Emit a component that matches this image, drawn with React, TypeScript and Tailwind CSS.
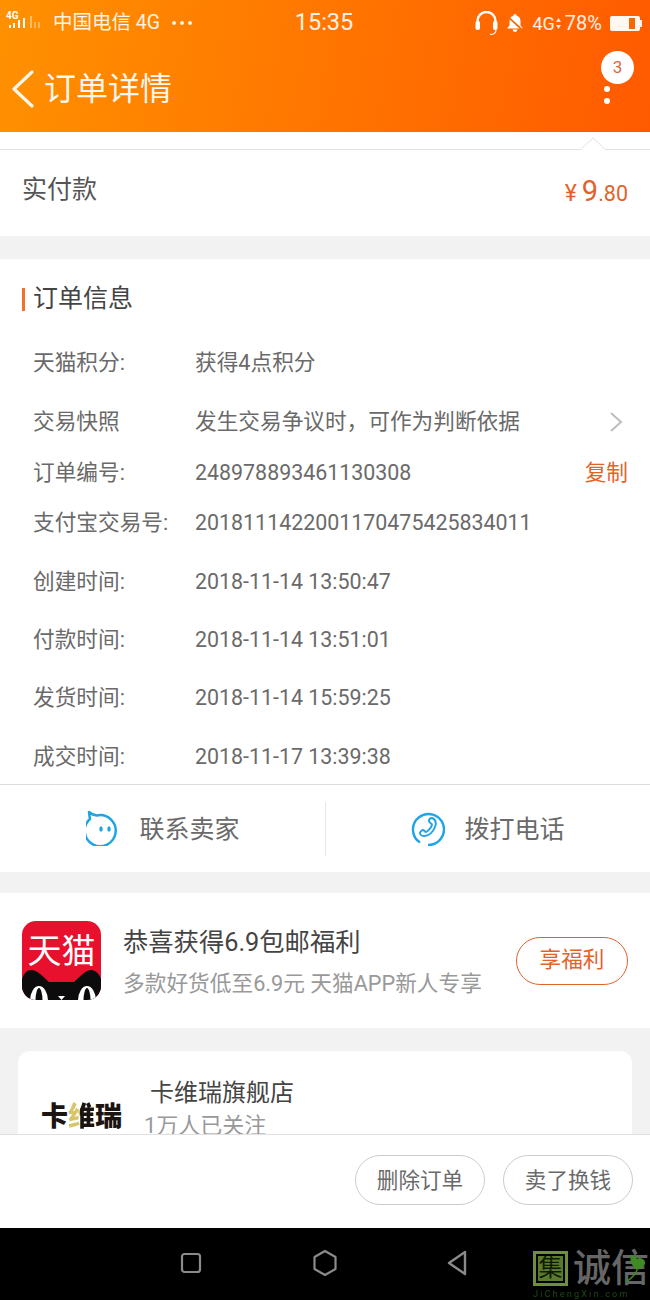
import React from "react";

const font = "font-['Roboto','Noto_Sans_CJK_SC',sans-serif]";

function InfoRow({ label, value, h, digits, right }: { label: string; value: string; h: string; digits?: boolean; right?: React.ReactNode }) {
  return (
    <div className={`flex items-center pl-[33px] pr-[22px] text-[21.67px] text-[#6a6a6a] ${h}`}>
      <span className="w-[162px] shrink-0 whitespace-nowrap">{label}</span>
      <span className={digits ? "flex-1 whitespace-nowrap text-[21.4px]" : "flex-1 whitespace-nowrap"}>{value}</span>
      {right}
    </div>
  );
}

function StatusBar() {
  return (
    <div className="flex h-[46px] items-center pl-[6px] pr-[8px] text-white/90">
      <div className="flex flex-1 items-center">
        <svg width="40" height="34" viewBox="0 -6 40 34" fill="none" stroke="white" strokeWidth="2">
          <text x="0" y="7" fontSize="10" fontWeight="700" fill="white" stroke="none" fontFamily="Roboto">4G</text>
          <path d="M4 13v3M8 11v5M13 8v8M18 6v10" />
          <path d="M25 4v12" strokeOpacity="0.7" strokeWidth="1.200" />
          <path d="M29 10v6M33 10v6" strokeOpacity="0.45" strokeWidth="1.600" />
        </svg>
        <span className="ml-[7px] whitespace-nowrap text-[19.5px]">中国电信 4G</span>
        <span className="ml-[12px] flex gap-[4px]">
          <i className="size-[4px] rounded-full bg-white/90" />
          <i className="size-[4px] rounded-full bg-white/90" />
          <i className="size-[4px] rounded-full bg-white/90" />
        </span>
      </div>
      <span className="text-[23.5px]">15:35</span>
      <div className="flex flex-1 items-center justify-end">
        <svg width="23" height="25" viewBox="0 0 23 25" fill="none" stroke="white" strokeWidth="2.400">
          <path d="M2.500 15V10a9 9 0 0 1 18 0v5" />
          <rect x="0.500" y="10" width="4.500" height="9" rx="2" fill="white" stroke="none" />
          <rect x="18" y="10" width="4.500" height="9" rx="2" fill="white" stroke="none" />
          <path d="M21 19c0 3-2 4.500-6 4.500" strokeWidth="1.200" />
        </svg>
        <svg className="ml-[8px]" width="18" height="20" viewBox="0 0 18 20" fill="white">
          <path d="M9 1a1.500 1.500 0 0 1 1.500 1.500c3 .8 4 3.200 4 6v4L17 15.500H1l2.500-3v-4c0-2.800 1-5.200 4-6A1.500 1.500 0 0 1 9 1zM6.500 16.500h5a2.500 2.500 0 0 1-5 0z" />
          <path d="M1 3l16 14.500" stroke="#fb6a00" strokeWidth="1.800" />
        </svg>
        <span className="ml-[8px] whitespace-nowrap text-[18px]">4G</span>
        <svg className="ml-[1px]" width="5" height="11" viewBox="0 0 5 11" fill="white" fillOpacity="0.85">
          <path d="M2.500 0L5 4H0zM0 7h5l-2.500 4z" />
        </svg>
        <span className="ml-[4px] whitespace-nowrap text-[20px]">78%</span>
        <span className="ml-[8px] flex h-[15px] w-[30px] items-center rounded-[2px] bg-white/95 py-[2px] pl-[19px]">
          <i className="h-full w-[6px] bg-[#f46a00]" />
        </span>
        <i className="h-[7px] w-[2px] bg-white/90" />
      </div>
    </div>
  );
}

function ChatIcon() {
  return (
    <svg width="34" height="35" viewBox="0 0 34 35" fill="none" stroke="#1fa4e6" strokeWidth="2.500">
      <path d="M3 1c.3 2.500.5 4.500 1 7a15.500 15.500 0 1 0 7-3.500C8 4 5 3 3 1z" strokeLinejoin="round" />
      <ellipse cx="15" cy="18" rx="1.700" ry="2.800" fill="#1fa4e6" stroke="none" />
      <ellipse cx="23" cy="18" rx="1.700" ry="2.800" fill="#1fa4e6" stroke="none" />
    </svg>
  );
}

function PhoneIcon() {
  return (
    <svg width="34" height="35" viewBox="0 0 34 35" fill="none" stroke="#1fa4e6" strokeWidth="2.400">
      <path d="M9 31.500A15.500 15.500 0 1 1 17 34" />
      <path d="M21 7c3 1 5 4 3 9-2 5-6 9-11 9-3 0-4-2-4-3s2-3 3-3 2 2 3 2 5-4 6-7c0-2-3-2-3-4s1-3 3-3z" strokeWidth="2" />
    </svg>
  );
}

function TmallLogo() {
  return (
    <div className="flex size-[79px] shrink-0 flex-col items-center overflow-hidden rounded-[14px] bg-[#e8112d]">
      <span className="mt-[8px] h-[41px] whitespace-nowrap text-[34px] leading-[44px] text-white">天猫</span>
      <svg width="79" height="30" viewBox="0 0 79 30">
        <path d="M0 30V9C2 3 5 0 9 0c7 0 12 7 18 12h25c6-5 11-12 17-12 4 0 8 3 10 9v21z" fill="#0c0c0c" />
        <ellipse cx="17" cy="31" rx="9" ry="15" fill="white" />
        <ellipse cx="17" cy="31" rx="3.500" ry="13" fill="#0c0c0c" />
        <ellipse cx="65" cy="31" rx="9" ry="15" fill="white" />
        <ellipse cx="65" cy="31" rx="3.500" ry="13" fill="#0c0c0c" />
        <path d="M36 26h7l-3.500 4z" fill="white" />
      </svg>
    </div>
  );
}

export default function App() {
  return (
    <div className={`flex h-[1300px] w-[650px] flex-col overflow-hidden bg-[#f2f2f2] ${font}`}>
      <header className="h-[132px] shrink-0 bg-[linear-gradient(100deg,#ff9100,#ff5a00)]">
        <StatusBar />
        <div className="flex h-[86px] items-start justify-between pl-[12px] pr-[16px]">
          <div className="flex items-center pt-[24px]">
            <svg width="22" height="38" viewBox="0 0 22 38" fill="none" stroke="white" strokeOpacity="0.92" strokeWidth="3.200" strokeLinecap="round" strokeLinejoin="round">
              <path d="M20 2L2 19l18 17" />
            </svg>
            <span className="ml-[10px] whitespace-nowrap text-[32px] leading-[38px] text-white/95">订单详情</span>
          </div>
          <div className="flex flex-col items-center pt-[5px]">
            <span className="flex size-[33px] items-center justify-center rounded-full bg-white text-[17px] text-[#e2663a]">3</span>
            <div className="mr-[21px] mt-[2px] flex flex-col items-center gap-[6px] self-center">
              <i className="size-[6px] rounded-full bg-white" />
              <i className="size-[6px] rounded-full bg-white" />
            </div>
          </div>
        </div>
      </header>

      <div className="flex-1 overflow-hidden">
        <div className="relative h-[18px] border-b border-[#e2e2e2] bg-white">
          <svg className="absolute left-[579px] top-[5px]" width="28" height="14" viewBox="0 0 28 14" fill="white" stroke="#e2e2e2">
            <path d="M1 13L14 1l13 12" />
          </svg>
        </div>
        <section className="flex h-[86px] items-center justify-between bg-white pl-[22px] pr-[22px]">
          <span className="pb-[6px] text-[25px] text-[#555]">实付款</span>
          <span className="flex items-baseline pb-[3px] text-[#e2622b]">
            <span className="mr-[5px] text-[23px]">¥</span>
            <span className="text-[29px]">9</span>
            <span className="text-[21.5px]">.80</span>
          </span>
        </section>

        <section className="mt-[23px] h-[526px] border-b border-[#dcdcdc] bg-white">
          <div className="flex h-[80px] items-center pl-[22px]">
            <i className="mr-[9px] h-[23px] w-[3px] bg-[#f2702a]" />
            <span className="ml-[-1px] text-[25px] text-[#444]">订单信息</span>
          </div>
          <InfoRow label="天猫积分:" value="获得4点积分" h="h-[48px]" />
          <InfoRow
            label="交易快照"
            value="发生交易争议时，可作为判断依据"
            h="h-[70px]"
            right={
              <svg className="mr-[5px]" width="14" height="22" viewBox="0 0 14 22" fill="none" stroke="#bdbdbd" strokeWidth="2">
                <path d="M2 2l10 9-10 9" />
              </svg>
            }
          />
          <InfoRow label="订单编号:" value="248978893461130308" digits h="h-[32px]" right={<span className="text-[#e2622b]">复制</span>} />
          <InfoRow label="支付宝交易号:" value="2018111422001170475425834011" digits h="h-[68px]" />
          <InfoRow label="创建时间:" value="2018-11-14 13:50:47" digits h="h-[50px]" />
          <InfoRow label="付款时间:" value="2018-11-14 13:51:01" digits h="h-[66px]" />
          <InfoRow label="发货时间:" value="2018-11-14 15:59:25" digits h="h-[50px]" />
          <InfoRow label="成交时间:" value="2018-11-17 13:39:38" digits h="h-[60px] pt-[8px]" />
        </section>

        <section className="flex h-[87px] items-center bg-white">
          <div className="flex w-[325px] shrink-0 items-center justify-center gap-[19px] pl-[1px]">
            <ChatIcon />
            <span className="pt-[2px] text-[25px] text-[#6a6a6a]">联系卖家</span>
          </div>
          <i className="h-[54px] w-px bg-[#e6e6e6]" />
          <div className="flex flex-1 items-center justify-center gap-[19px]">
            <PhoneIcon />
            <span className="pt-[2px] text-[25px] text-[#6a6a6a]">拨打电话</span>
          </div>
        </section>

        <section className="mt-[21px] flex h-[135px] items-center bg-white pl-[22px] pr-[22px]">
          <TmallLogo />
          <div className="ml-[22px] flex-1 whitespace-nowrap pt-[4px]">
            <div className="text-[25.3px] leading-[34px] text-[#444]">恭喜获得6.9包邮福利</div>
            <div className="mt-[8px] text-[21.7px] leading-[32px] text-[#999]">多款好货低至6.9元 天猫APP新人专享</div>
          </div>
          <span className="flex h-[48px] w-[112px] items-center justify-center rounded-full border border-[#e2622b] text-[21.6px] text-[#e2622b]">享福利</span>
        </section>

        <section className="mx-[18px] mt-[23px] flex h-[120px] rounded-[12px] bg-white pl-[23px] pt-[27px]">
          <span className="mt-[21px] h-[36px] w-[103px] shrink-0 whitespace-nowrap text-[27px] font-black leading-[36px] text-[#1c1410]">
            卡<span className="bg-[linear-gradient(90deg,#d8c56a_45%,#1c1410_45%)] bg-clip-text text-transparent">维</span>瑞
          </span>
          <div className="whitespace-nowrap">
            <div className="pl-[6px] text-[24px] leading-[30px] text-[#444]">卡维瑞旗舰店</div>
            <div className="mt-[3px] text-[22px] leading-[30px] text-[#999]">1万人已关注</div>
          </div>
        </section>
      </div>

      <footer className="flex h-[94px] shrink-0 items-center justify-end gap-[18px] border-t border-[#e0e0e0] bg-white pb-[3px] pr-[17px]">
        <span className="flex h-[50px] w-[130px] items-center justify-center rounded-full border border-[#ccc] pt-[2px] text-[21.6px] text-[#6a6a6a]">删除订单</span>
        <span className="flex h-[50px] w-[130px] items-center justify-center rounded-full border border-[#ccc] pt-[2px] text-[21.6px] text-[#6a6a6a]">卖了换钱</span>
      </footer>

      <nav className="relative flex h-[72px] shrink-0 items-center bg-black pb-[2px] pl-[180px]">
        <svg width="22" height="22" viewBox="0 0 22 22" fill="none" stroke="#8a8a8a" strokeWidth="2.200">
          <rect x="2" y="2" width="18" height="18" rx="2.500" />
        </svg>
        <svg className="ml-[110px]" width="26" height="28" viewBox="0 0 26 28" fill="none" stroke="#8a8a8a" strokeWidth="2.200" strokeLinejoin="round">
          <path d="M13 2l10.500 6v12L13 26 2.500 20V8z" />
        </svg>
        <svg className="ml-[108px]" width="22" height="28" viewBox="0 0 22 28" fill="none" stroke="#8a8a8a" strokeWidth="2.400" strokeLinejoin="round">
          <path d="M19 3L3 14l16 11z" />
        </svg>
        <div className="absolute left-[533px] top-[22px] flex w-[117px] flex-col">
          <div className="flex items-center">
            <span className="size-[35px] border-[3px] border-[#6f8f3f] p-[2px]">
              <span className="flex size-full items-center justify-center bg-[#5a7a2c] text-[24px] leading-none text-[#0f1a05]">集</span>
            </span>
            <span className="ml-[5px] whitespace-nowrap text-[38px] font-medium leading-[36px] text-[#666]">诚信</span>
          </div>
          <span className="mt-[2px] whitespace-nowrap text-[9px] leading-[12px] tracking-[2.200px] text-[#1f4a1a]">JiChengXin.com</span>
          <svg className="absolute left-[92px] top-[2px]" width="25" height="32" viewBox="0 0 25 32">
            <path d="M12 18C4 12 4 3 8 3c2 0 3 2 4 4 2-2 5-1 7 1 3 3 0 8-7 10z" fill="#3f8a24" />
            <path d="M12 18C10 24 5 27 1 30" stroke="#3f8a24" strokeWidth="1.500" fill="none" />
          </svg>
        </div>
      </nav>
    </div>
  );
}
